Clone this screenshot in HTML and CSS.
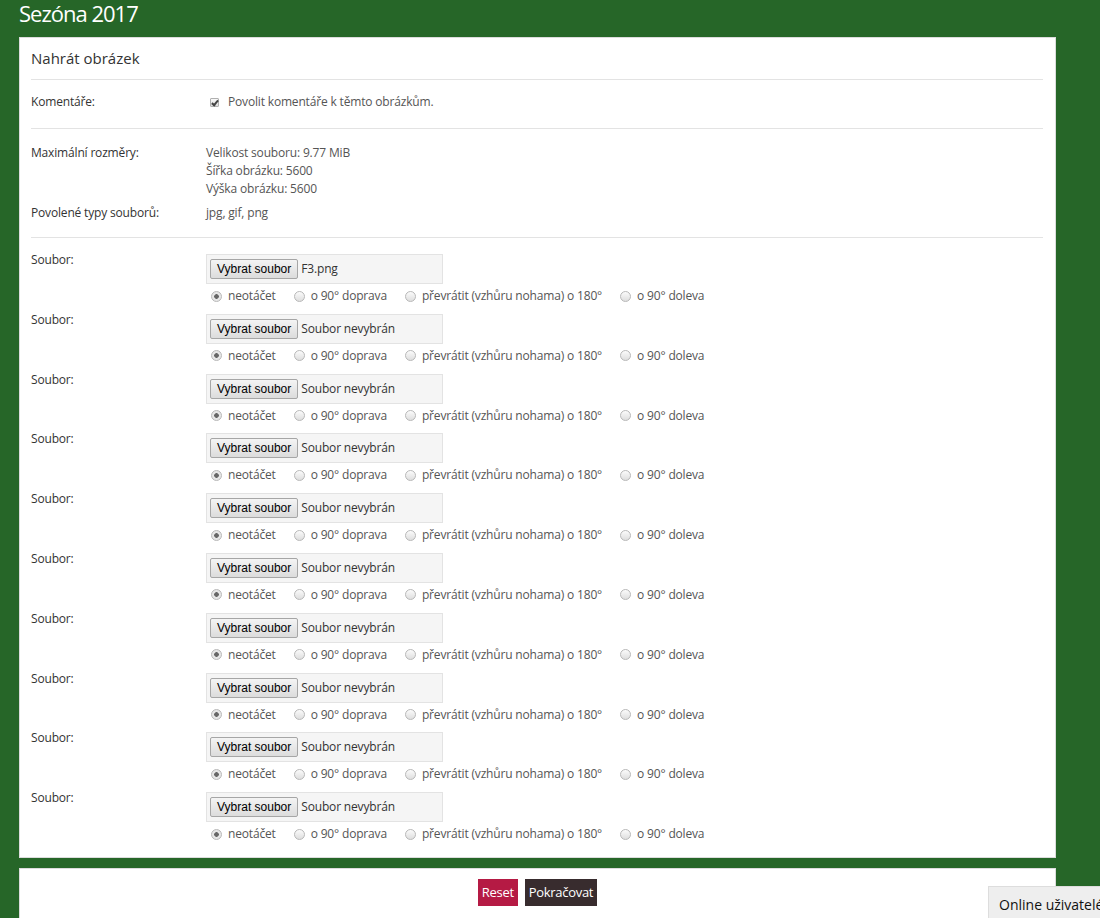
FILE: index.html
```html
<!DOCTYPE html>
<html lang="cs">
<head>
    <meta charset="UTF-8">
    <meta name="viewport" content="width=device-width, initial-scale=1.0">
    <title>Sezóna 2017 - Nahrát obrázek</title>
    <link rel="stylesheet" href="styles.css">
</head>
<body>
    <h1 class="page-title">Sezóna 2017</h1>

    <form class="upload" action="#" method="post">
        <div class="panel">
            <h2 class="panel-title">Nahrát obrázek</h2>

            <div class="section section-comments">
                <div class="row">
                    <div class="label">Komentáře:</div>
                    <div class="value">
                        <label class="check"><input type="checkbox" name="allow_comments" checked> Povolit komentáře k těmto obrázkům.</label>
                    </div>
                </div>
            </div>

            <div class="section section-limits">
                <div class="row">
                    <div class="label">Maximální rozměry:</div>
                    <div class="value">
                        Velikost souboru: 9.77 MiB<br>
                        Šířka obrázku: 5600<br>
                        Výška obrázku: 5600
                    </div>
                </div>
                <div class="row row-types">
                    <div class="label">Povolené typy souborů:</div>
                    <div class="value">jpg, gif, png</div>
                </div>
            </div>

            <div class="section section-files" id="files"></div>
        </div>

        <div class="panel panel-actions">
            <button type="reset" class="btn btn-reset">Reset</button>
            <button type="submit" class="btn btn-submit">Pokračovat</button>
        </div>
    </form>

    <div class="online">Online uživatelé</div>

    <script>
        var files = ['F3.png'];
        var rotations = ['neotáčet', 'o 90° doprava', 'převrátit (vzhůru nohama) o 180°', 'o 90° doleva'];
        var html = '';
        for (var i = 0; i < 10; i++) {
            var name = files[i] || 'Soubor nevybrán';
            html += '<div class="row row-file">' +
                '<div class="label">Soubor:</div>' +
                '<div class="value">' +
                    '<div class="file-box"><span class="file-btn">Vybrat soubor</span><span class="file-name">' + name + '</span></div>' +
                    '<div class="rotate">';
            for (var r = 0; r < rotations.length; r++) {
                html += '<label><input type="radio" name="rotate_' + i + '"' + (r === 0 ? ' checked' : '') + '>' + rotations[r] + '</label>';
            }
            html += '</div></div></div>';
        }
        document.getElementById('files').innerHTML = html;
    </script>
</body>
</html>
```

FILE: styles.css
```css
body {
    margin: 0;
    padding: 0;
    background: #266628;
    font-family: "Open Sans", Arial, sans-serif;
    font-size: 12px;
    letter-spacing: -0.17px;
    color: #444;
}

.page-title {
    margin: 0 0 11px 19px;
    font-size: 22px;
    line-height: 26px;
    font-weight: normal;
    letter-spacing: -1px;
    color: #fff;
}

.upload {
    width: 1037px;
    margin-left: 19px;
}

.panel {
    background: #fff;
    border: 1px solid #dcdcdc;
    padding: 10px 12px 8px 11px;
}

.panel-title {
    margin: 0;
    padding-bottom: 11px;
    font-size: 15px;
    line-height: 20px;
    font-weight: normal;
    letter-spacing: 0;
    color: #333;
    border-bottom: 1px solid #e3e3e3;
}

.section {
    border-bottom: 1px solid #e3e3e3;
}

.section-files {
    border-bottom: none;
    padding-top: 13px;
}

.section-comments {
    padding: 13px 0 17px;
}

.section-limits {
    padding: 15px 0 15px;
}

.row {
    display: grid;
    grid-template-columns: 175px 1fr;
    line-height: 18px;
}

.row-types {
    margin-top: 6px;
}

.label {
    color: #333;
}

.value {
    color: #555;
}

.check {
    display: flex;
    align-items: center;
}

.check input {
    appearance: none;
    -webkit-appearance: none;
    width: 9px;
    height: 9px;
    margin: 0 9px 0 4px;
    border: 1px solid #b0b0b0;
    border-radius: 1px;
    background: linear-gradient(#fafafa, #dedede);
    position: relative;
}

.check input:checked::after {
    content: "";
    position: absolute;
    left: 2px;
    top: 0;
    width: 2px;
    height: 5px;
    border: solid #444;
    border-width: 0 2px 2px 0;
    transform: rotate(40deg);
}

.row-file {
    margin-bottom: 4.8px;
}

.file-box {
    box-sizing: border-box;
    width: 237px;
    height: 30px;
    margin-top: 3px;
    padding: 0 3px;
    display: flex;
    align-items: center;
    background: #f5f5f5;
    border: 1px solid #e3e3e3;
}

.file-btn {
    box-sizing: border-box;
    height: 20px;
    padding: 0 6px;
    font-family: "Liberation Sans", Arial, sans-serif;
    font-size: 12px;
    line-height: 18px;
    letter-spacing: 0;
    color: #000;
    background: linear-gradient(#f4f4f4, #dcdcdc);
    border: 1px solid #a6a6a6;
    border-radius: 2px;
}

.file-name {
    margin-left: 3px;
    color: #333;
}

.rotate {
    display: flex;
    align-items: center;
    height: 20px;
    margin-top: 2px;
}

.rotate label {
    display: flex;
    align-items: center;
    margin-right: 13px;
}

.rotate input {
    appearance: none;
    -webkit-appearance: none;
    box-sizing: border-box;
    width: 11px;
    height: 11px;
    margin: 0 6px 0 5px;
    border: 1px solid #b8b8b8;
    border-radius: 50%;
    background: linear-gradient(#fbfbfb, #dedede);
}

.rotate input:checked {
    background: radial-gradient(circle, #666 0 2px, #e6e6e6 2.6px);
}

.panel-actions {
    margin-top: 10px;
    padding: 10px 0 20px;
    text-align: center;
}

.btn {
    height: 27px;
    padding: 0 4px;
    margin: 0 2px;
    border: none;
    font-family: "Open Sans", Arial, sans-serif;
    font-size: 13px;
    line-height: 27px;
    letter-spacing: -0.3px;
    color: #fff;
    cursor: pointer;
}

.btn-reset {
    background: #b51a44;
}

.btn-submit {
    background: #382c2e;
}

.online {
    position: fixed;
    left: 988px;
    top: 886px;
    width: 140px;
    height: 40px;
    padding: 8px 10px;
    background: #eee;
    border: 1px solid #ddd;
    font-size: 14px;
    line-height: 20px;
    letter-spacing: 0;
    color: #111;
    white-space: nowrap;
}
```
